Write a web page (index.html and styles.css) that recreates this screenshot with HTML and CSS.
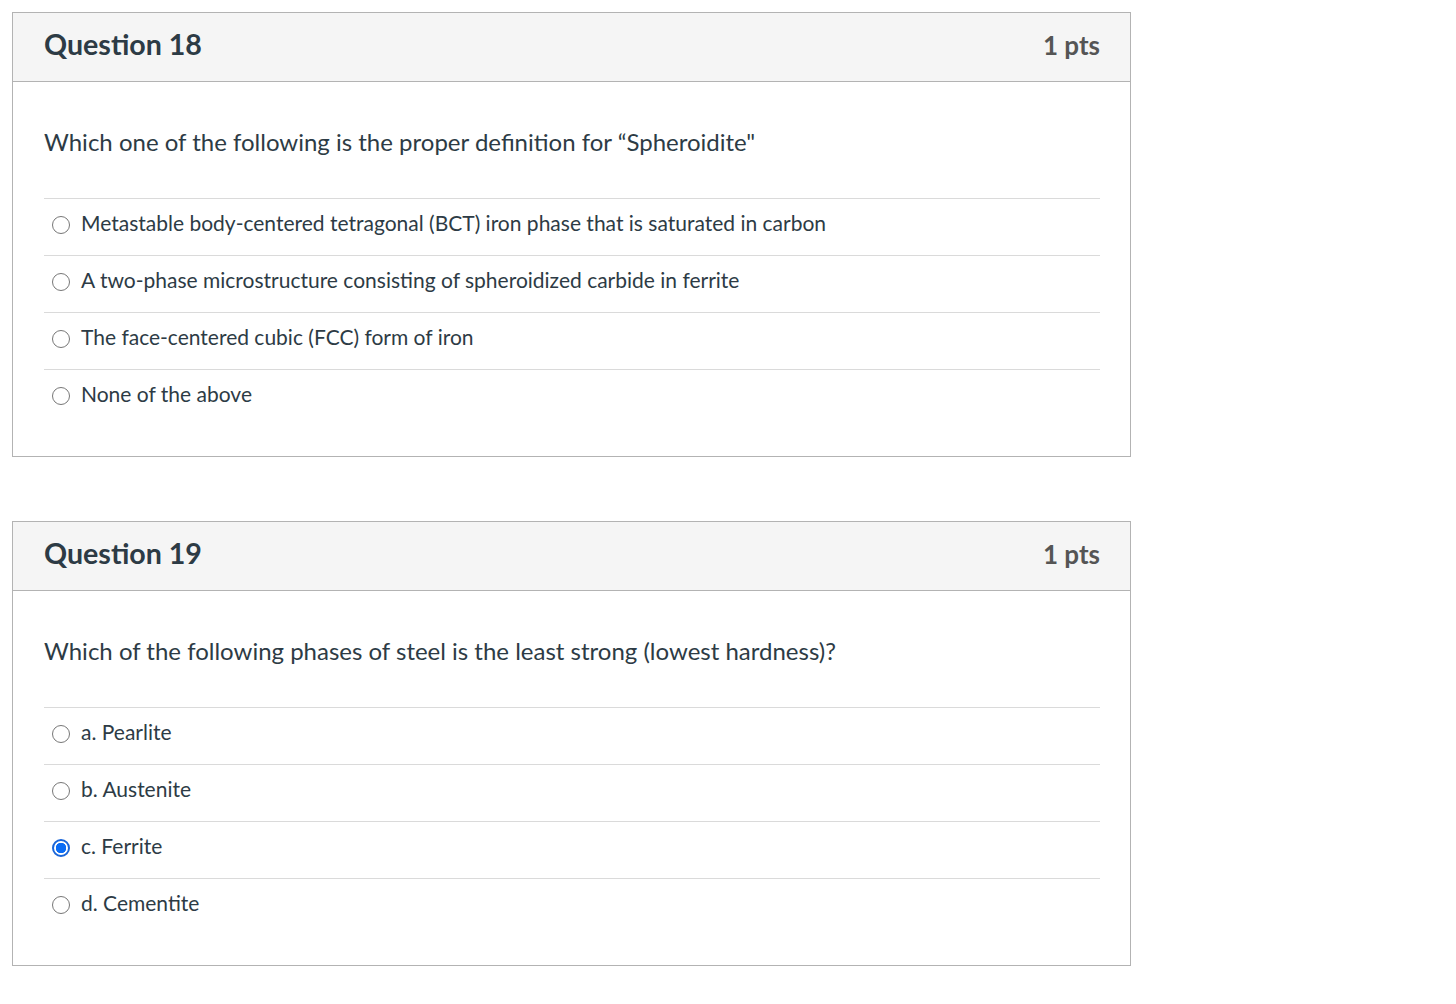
FILE: index.html
```html
<!DOCTYPE html>
<html>
<head>
<meta charset="utf-8">
<link rel="stylesheet" href="styles.css">
</head>
<body>
<div class="page">
  <div class="card">
    <div class="card-head">
      <h2 class="title">Question 18</h2>
      <span class="pts">1 pts</span>
    </div>
    <div class="card-body">
      <p class="question">Which one of the following is the proper definition for “Spheroidite"</p>
      <div class="answers">
        <label class="answer"><span class="radio"></span>Metastable body-centered tetragonal (BCT) iron phase that is saturated in carbon</label>
        <label class="answer"><span class="radio"></span>A two-phase microstructure consisting of spheroidized carbide in ferrite</label>
        <label class="answer"><span class="radio"></span>The face-centered cubic (FCC) form of iron</label>
        <label class="answer"><span class="radio"></span>None of the above</label>
      </div>
    </div>
  </div>
  <div class="card">
    <div class="card-head">
      <h2 class="title">Question 19</h2>
      <span class="pts">1 pts</span>
    </div>
    <div class="card-body">
      <p class="question">Which of the following phases of steel is the least strong (lowest hardness)?</p>
      <div class="answers">
        <label class="answer"><span class="radio"></span>a. Pearlite</label>
        <label class="answer"><span class="radio"></span>b. Austenite</label>
        <label class="answer"><span class="radio checked"></span>c. Ferrite</label>
        <label class="answer"><span class="radio"></span>d. Cementite</label>
      </div>
    </div>
  </div>
</div>
</body>
</html>
```

FILE: styles.css
```css
html, body {
  margin: 0;
  padding: 0;
  background: #ffffff;
}
body {
  font-family: Lato, "Open Sans", sans-serif;
  color: #2d3b45;
}
.page {
  padding: 12px 0 0 12px;
  width: 1119px;
  display: flex;
  flex-direction: column;
  gap: 64px;
}
.card {
  border: 1px solid #b3b3b3;
  background: #fff;
}
.card-head {
  background: #f5f5f5;
  border-bottom: 1px solid #b3b3b3;
  height: 68px;
  display: flex;
  align-items: center;
  justify-content: space-between;
  padding: 0 30px 0 31px;
}
.title {
  margin: 0;
  font-size: 28.6px;
  font-weight: 700;
  color: #2d3b45;
  position: relative;
  top: -3px;
}
.pts {
  font-size: 26px;
  font-weight: 700;
  color: #555;
  position: relative;
  top: -2px;
}
.card-body {
  padding: 30px 30px 30px 31px;
}
.question {
  margin: 13px 0 40px 0;
  font-size: 24px;
  line-height: 33px;
  color: #2d3b45;
}
.answer {
  display: flex;
  align-items: center;
  height: 57px;
  box-sizing: border-box;
  padding-bottom: 9px;
  border-top: 1px solid #dadada;
  font-size: 21px;
  color: #2d3b45;
  padding-left: 8px;
  gap: 11px;
}
.radio {
  width: 18px;
  height: 18px;
  box-sizing: border-box;
  border: 1.6px solid #777777;
  border-radius: 50%;
  flex: none;
  position: relative;
  top: 2px;
}
.radio.checked {
  border: 2px solid #1a66d9;
  background: radial-gradient(circle, #0a6cf5 0 5px, #ffffff 5.5px);
}
```
